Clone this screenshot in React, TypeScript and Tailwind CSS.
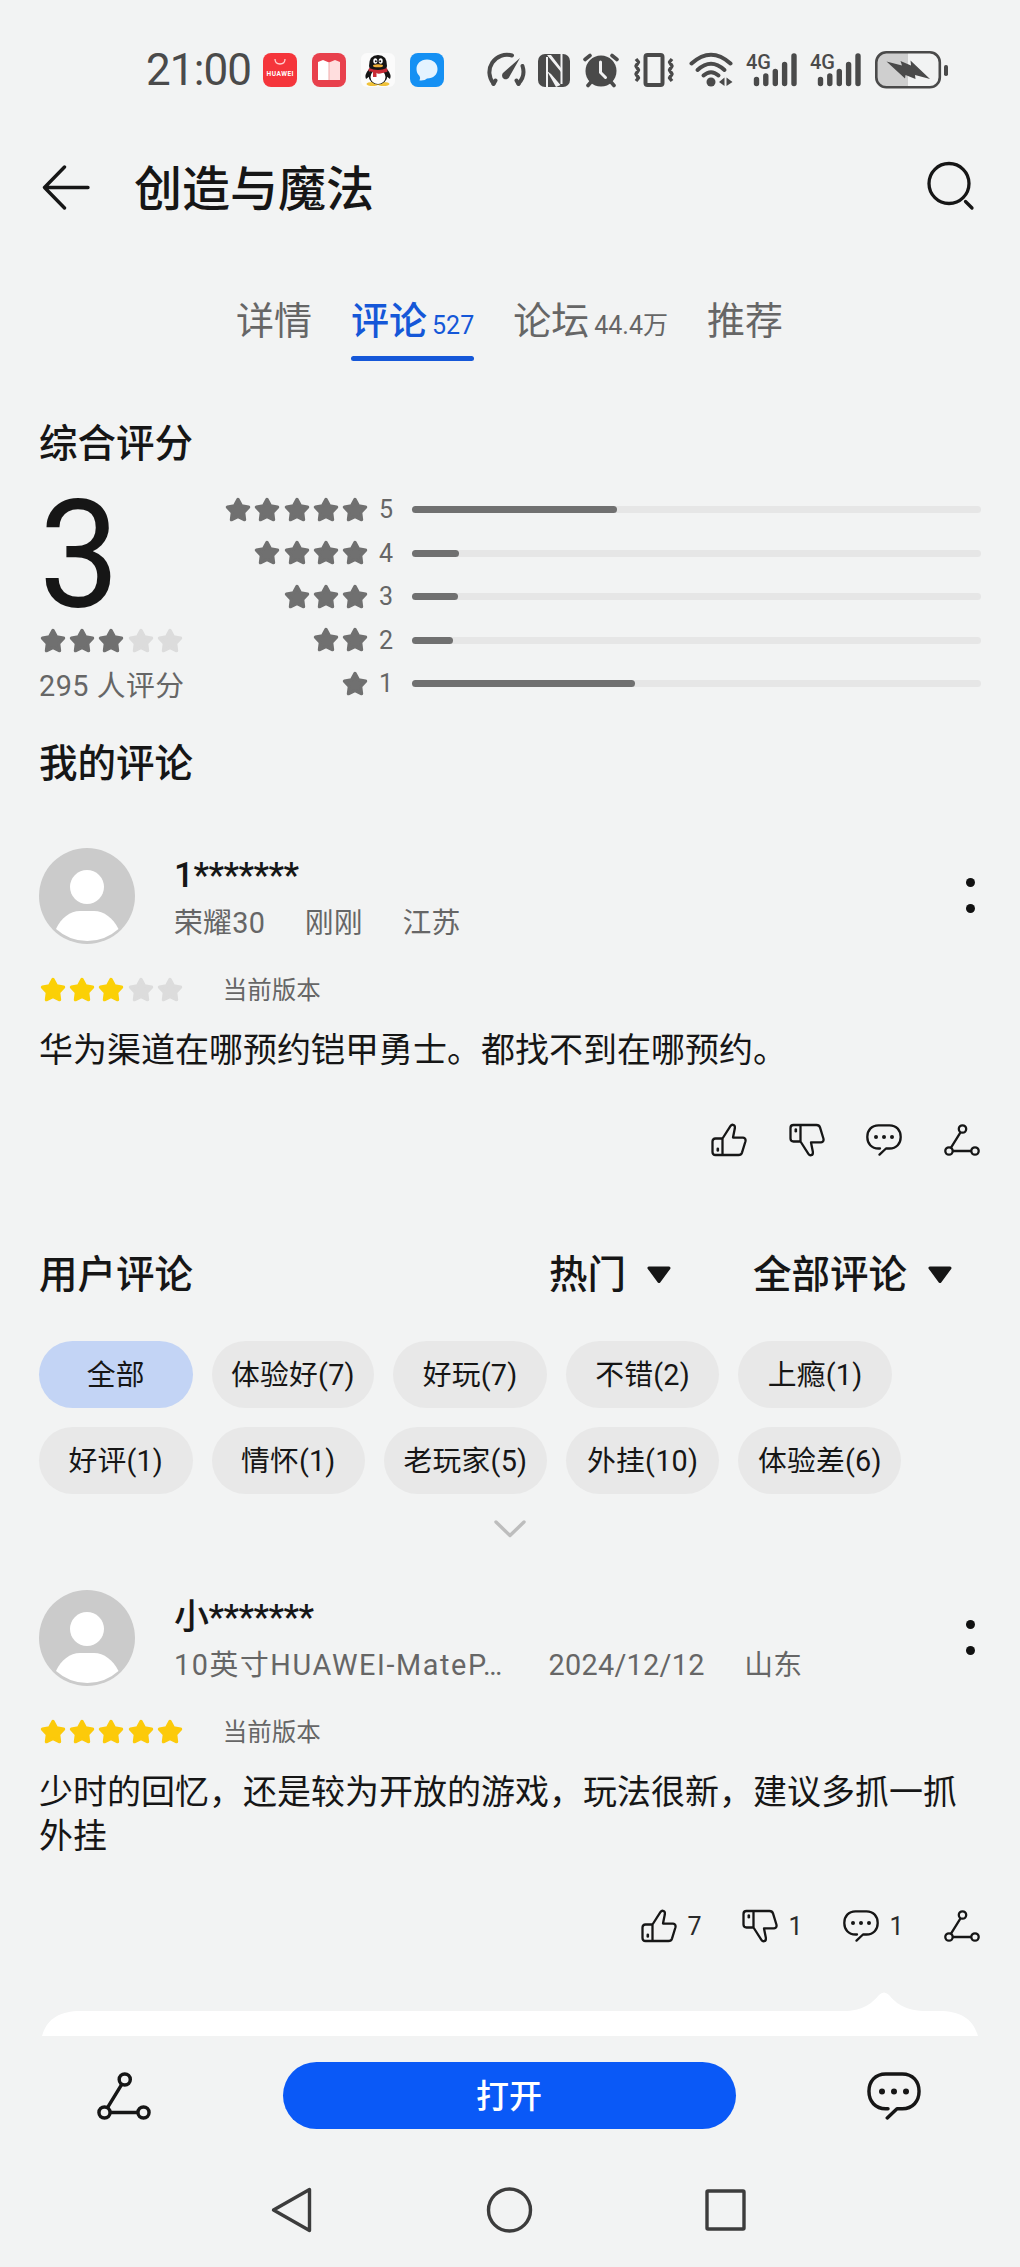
import { ReactNode } from "react";

const tabs = [
  { label: "详情", count: "", active: false },
  { label: "评论", count: "527", active: true },
  { label: "论坛", count: "44.4万", active: false },
  { label: "推荐", count: "", active: false },
];

const ratings = [
  { stars: 5, percent: 36 },
  { stars: 4, percent: 8.2 },
  { stars: 3, percent: 8.1 },
  { stars: 2, percent: 7.2 },
  { stars: 1, percent: 39.2 },
];

const tags = [
  ["全部", "体验好(7)", "好玩(7)", "不错(2)", "上瘾(1)"],
  ["好评(1)", "情怀(1)", "老玩家(5)", "外挂(10)", "体验差(6)"],
];

const reviews = [
  {
    name: "1*******",
    device: "荣耀30",
    deviceClass: "",
    date: "刚刚",
    region: "江苏",
    score: 3,
    starColor: "text-[#fbd006]",
    content: "华为渠道在哪预约铠甲勇士。都找不到在哪预约。",
    likes: "",
    dislikes: "",
    replies: "",
  },
  {
    name: "小*******",
    device: "10英寸HUAWEI-MateP…",
    deviceClass: "w-[335px] tracking-[1.6px] whitespace-nowrap",
    date: "2024/12/12",
    region: "山东",
    score: 5,
    starColor: "text-[#fcca0a]",
    content: "少时的回忆，还是较为开放的游戏，玩法很新，建议多抓一抓外挂",
    likes: "7",
    dislikes: "1",
    replies: "1",
  },
];

function Star({ className }: { className: string }) {
  return (
    <svg viewBox="0 0 26 26" className={`w-[26px] h-[26px] shrink-0 ${className}`}>
      <path
        d="M13 2.4 L16.5 8.7 L23.6 10.1 L18.7 15.5 L19.6 22.7 L13 19.6 L6.4 22.7 L7.3 15.5 L2.4 10.1 L9.5 8.7 Z"
        fill="currentColor"
        stroke="currentColor"
        strokeWidth="3.2"
        strokeLinejoin="round"
      />
    </svg>
  );
}

function Stars({ score, color }: { score: number; color: string }) {
  return (
    <div className="flex gap-[3.2px] pl-px">
      {[1, 2, 3, 4, 5].map((n) => (
        <Star key={n} className={n <= score ? color : "text-[#dcdcdc]"} />
      ))}
    </div>
  );
}

function ThumbIcon({ down = false }: { down?: boolean }) {
  return (
    <svg
      viewBox="0 0 36 34"
      className={`w-[36px] h-[34px] ${down ? "-scale-y-100" : ""}`}
      fill="none"
      stroke="#161616"
      strokeWidth="2.3"
      strokeLinejoin="round"
      strokeLinecap="round"
    >
      <path d="M11.5 15.5 H4.5 Q1.5 15.5 1.5 18.5 V29 Q1.5 32 4.5 32 H27.5 Q30.2 32 31 29.6 L34.4 18.5 Q35.2 15 32 14.6 H22 L23.8 5.6 Q24.3 2.2 22.2 1.8 Q20.6 1.4 19.4 3.2 L11.5 15.5 V32" />
      <path d="M6.8 25.8 V27.5" strokeWidth="2.6" />
    </svg>
  );
}

function CommentIcon({ className }: { className: string }) {
  return (
    <svg
      viewBox="0 0 36 32"
      className={className}
      fill="none"
      stroke="#161616"
      strokeWidth="2.3"
      strokeLinejoin="round"
      strokeLinecap="round"
    >
      <path d="M14 24.5 H12.5 C5.5 24.5 1.3 19.5 1.3 12.9 S5.5 1.3 12.5 1.3 H23.5 C30.5 1.3 34.7 6.3 34.7 12.9 S30.5 24.5 23.5 24.5 H20 L13.5 30.6" />
      <g fill="#161616" stroke="none">
        <circle cx="10" cy="13" r="2" />
        <circle cx="18" cy="13" r="2" />
        <circle cx="26" cy="13" r="2" />
      </g>
    </svg>
  );
}

function ShareIcon({ className }: { className: string }) {
  return (
    <svg viewBox="0 0 36 32" className={className} fill="none" stroke="#161616" strokeWidth="2.3">
      <circle cx="18.5" cy="5" r="3.7" />
      <circle cx="5" cy="27" r="3.7" />
      <circle cx="31" cy="27" r="3.7" />
      <path d="M16.5 8.3 L7 23.7 M8.8 27 H27.2" />
    </svg>
  );
}

function Avatar() {
  return (
    <svg viewBox="0 0 96 96" className="w-24 h-24 shrink-0">
      <circle cx="48" cy="48" r="48" fill="#cbcbcb" />
      <circle cx="48" cy="39" r="17" fill="#fff" />
      <path d="M17 81 C22 70 31 63 41 63 H55 C65 63 74 70 79.5 81 A46.5 46.5 0 0 1 17 81 Z" fill="#fff" />
    </svg>
  );
}

function SignalIcon() {
  return (
    <svg viewBox="0 0 52 36" className="w-[52px] h-[36px] overflow-visible">
      <text x="0" y="16.5" fontSize="21" fontWeight="500" fill="#4a4a4a" textLength="25" lengthAdjust="spacingAndGlyphs">
        4G
      </text>
      <g stroke="#4a4a4a" strokeWidth="5.4" strokeLinecap="round">
        <path d="M10.5 27.5 V31.5 M19.8 24 V31.5 M29.3 19.5 V31.5 M38.6 12.5 V31.5 M48 4 V31.5" />
      </g>
    </svg>
  );
}

function StatusBar() {
  return (
    <div className="h-[140px] flex items-center pl-[146px] text-[#4a4a4a]">
      <span className="w-[105px] text-[44px] leading-none tracking-[-0.9px]">21:00</span>
      <div className="flex items-center gap-[15px] ml-[12px]">
        <svg viewBox="0 0 34 34" className="w-[34px] h-[34px] overflow-visible">
          <rect width="34" height="34" rx="8" fill="#f5353b" />
          <path d="M12 6 Q12 11 17 11 T22 6" fill="none" stroke="#ffd0d0" strokeWidth="1.3" />
          <text x="3.5" y="22.5" fontSize="6.6" fontWeight="700" fill="#fff" textLength="27">HUAWEI</text>
        </svg>
        <svg viewBox="0 0 34 34" className="w-[34px] h-[34px]">
          <rect width="34" height="34" rx="8" fill="#e8404c" />
          <path d="M6 9 L11 7 L17 9.5 V27 H6 Z" fill="#fff" />
          <path d="M17 9.5 L23 7 L28 9 V27 H17 Z" fill="#ffdede" />
          <path d="M17 9.5 V27" stroke="#efaaaa" strokeWidth="1" />
        </svg>
        <svg viewBox="0 0 34 34" className="w-[34px] h-[34px]">
          <rect width="34" height="34" rx="6" fill="#fbfbfb" />
          <ellipse cx="11.5" cy="31" rx="6" ry="2" fill="#f0c23a" />
          <ellipse cx="22.5" cy="31" rx="6" ry="2" fill="#f0c23a" />
          <path d="M8 16 Q3 22 5 26 L9 23 Z M26 16 Q31 22 29 26 L25 23 Z" fill="#151515" />
          <ellipse cx="17" cy="22" rx="9.5" ry="9.5" fill="#151515" />
          <ellipse cx="17" cy="24" rx="7.5" ry="7" fill="#fff" />
          <path d="M8 13 Q8 2 17 2 T26 13 L25 17 H9 Z" fill="#151515" />
          <ellipse cx="14.3" cy="8" rx="2" ry="2.8" fill="#fff" />
          <ellipse cx="19.7" cy="8" rx="2" ry="2.8" fill="#fff" />
          <circle cx="14.8" cy="8.3" r="1" fill="#151515" />
          <circle cx="19.2" cy="8.3" r="1" fill="#151515" />
          <ellipse cx="17" cy="12.8" rx="5" ry="1.5" fill="#efb13a" />
          <path d="M8 15 Q17 19 26 15 L26.5 18.5 Q17 22 15.5 19.8 V24 H12 V19 L7.5 18 Z" fill="#c92b36" />
        </svg>
        <svg viewBox="0 0 34 34" className="w-[34px] h-[34px]">
          <rect width="34" height="34" rx="8" fill="#1590f3" />
          <path d="M17 6.5 C23.5 6.5 27.5 10.8 27.5 16 C27.5 21.5 23.5 25.5 17 25.5 Q15 28 9.5 27.5 Q11 25.5 9.5 23 C7.5 21 6.5 19 6.5 16 C6.5 10.8 10.5 6.5 17 6.5 Z" fill="#e4f3ff" />
        </svg>
      </div>

      {/* 系统图标 */}
      <svg viewBox="0 0 40 36" className="w-[40px] h-[36px] ml-[42px]" fill="none" stroke="#4a4a4a" strokeWidth="4" strokeLinecap="round">
        <path d="M7.5 31.5 A17.5 17.5 0 0 1 26 3.5" />
        <path d="M36.5 14 A17.5 17.5 0 0 1 32.5 31.5" />
        <path d="M7.5 32 L9.5 28.5 M32.5 32 L30.5 28.5" />
        <path d="M34 6 L17.5 20.5 A3.8 3.8 0 1 0 23.5 24.5 Z" fill="#4a4a4a" stroke="none" />
      </svg>
      <svg viewBox="0 0 32 33" className="w-[32px] h-[33px] ml-[12px]">
        <rect width="32" height="33" rx="7" fill="#4a4a4a" />
        <path d="M9 3 V33 M23.5 0 V30" fill="none" stroke="#f2f2f3" strokeWidth="2" />
        <path d="M9 1 L13 1 L23 14 V18 Z M9 17 L13 20 L22.5 31 L18 33 Z" fill="#f2f2f3" />
      </svg>
      <svg viewBox="0 0 36 36" className="w-[36px] h-[36px] ml-[13px]" stroke="#4a4a4a" strokeWidth="3.6" strokeLinecap="round" fill="none">
        <circle cx="18" cy="19" r="15.5" fill="#4a4a4a" stroke="none" />
        <path d="M2 7.5 L7 3.5 M34 7.5 L29 3.5 M8 30 L5 33.5 M28 30 L31 33.5" />
        <path d="M17.5 10 V20.5 L22.5 25.5" stroke="#f2f2f3" strokeWidth="3" />
      </svg>
      <svg viewBox="0 0 42 34" className="w-[42px] h-[34px] ml-[14px]" fill="none" stroke="#4a4a4a" strokeWidth="4">
        <rect x="12.5" y="2" width="17" height="30" rx="2" />
        <path d="M3 6 L5.5 9 L3 13 L5.5 17 L3 21 L5.5 25 L3 28 M39 6 L36.5 9 L39 13 L36.5 17 L39 21 L36.5 25 L39 28" strokeWidth="3.4" strokeLinejoin="round" />
      </svg>
      <svg viewBox="0 0 44 36" className="w-[44px] h-[36px] ml-[14px]" fill="none" stroke="#4a4a4a" strokeWidth="4" strokeLinecap="round">
        <path d="M2.5 11.5 Q22 -6 41.5 11.5" />
        <path d="M8.5 18 Q22 5.5 35.5 18" />
        <path d="M14.5 23.5 Q22 17 29.5 23.5" />
        <circle cx="22" cy="30" r="4.5" fill="#4a4a4a" stroke="none" />
        <path d="M35.5 25.5 V34 L30 30 Z M37.5 25.5 V34 L43.5 30 Z" fill="#4a4a4a" stroke="none" />
      </svg>
      <div className="flex gap-[12px] ml-[13px]">
        <SignalIcon />
        <SignalIcon />
      </div>
      <svg viewBox="0 0 75 38" className="w-[75px] h-[38px] ml-[13px]">
        <path d="M11 2 H33 V36 H11 Q2 36 2 27 V11 Q2 2 11 2 Z" fill="#cfcfcf" />
        <rect x="1.3" y="1.3" width="63.5" height="35" rx="10" fill="none" stroke="#4a4a4a" strokeWidth="2.6" />
        <path d="M11.5 10.5 L27 14.5 L25.5 10 L36 14.5 L35.5 9.5 L55 28 L40 24 L40.5 28 L30.5 24 L30 27.5 Z" fill="#4a4a4a" />
        <rect x="69" y="14" width="4" height="11" rx="1.8" fill="#4a4a4a" />
      </svg>
    </div>
  );
}

function Action({ icon, count }: { icon: ReactNode; count?: string }) {
  return (
    <div className="flex items-center">
      {icon}
      {count ? <span className="w-[13px] ml-[11px] pt-px text-[25px] leading-[34px] text-[#2a2a2a]">{count}</span> : null}
    </div>
  );
}

function Review({ review }: { review: typeof reviews[0] }) {
  return (
    <article>
      <div className="h-[97px] flex">
        <Avatar />
        <div className="flex-1 ml-[39px] pt-[6px]">
          <div className="h-[44px] text-[35px] leading-[44px] tracking-[-0.5px] font-medium">{review.name}</div>
          <div className="h-[48px] flex gap-[39.5px] text-[28.8px] leading-[50px] tracking-[0.3px] text-[#666]">
            <span className={review.deviceClass}>{review.device}</span>
            <span>{review.date}</span>
            <span>{review.region}</span>
          </div>
        </div>
        <div className="flex flex-col gap-[17px] pt-[30px] mr-[6px]">
          <i className="w-[9px] h-[9px] rounded-full bg-[#111]"></i>
          <i className="w-[9px] h-[9px] rounded-full bg-[#111]"></i>
        </div>
      </div>
      <div className="h-[40px] mt-[25px] flex items-center">
        <Stars score={review.score} color={review.starColor} />
        <span className="h-[40px] ml-[40px] text-[24.5px] leading-[42px] text-[#666]">当前版本</span>
      </div>
      <p className="mt-[18px] text-[34px] leading-[44px]">{review.content}</p>
      <div className={`h-[40px] mt-[48px] flex items-center justify-end pr-[1.5px] ${review.likes ? "gap-[41px]" : "gap-[41.5px]"}`}>
        <Action icon={<ThumbIcon />} count={review.likes} />
        <Action icon={<ThumbIcon down />} count={review.dislikes} />
        <Action icon={<CommentIcon className="w-[36px] h-[32px]" />} count={review.replies} />
        <Action icon={<ShareIcon className="w-[36px] h-[32px]" />} />
      </div>
    </article>
  );
}

function Dropdown({ label }: { label: string }) {
  return (
    <div className="flex items-center gap-[20px]">
      <span>{label}</span>
      <svg viewBox="0 0 26 18" className="w-[26px] h-[18px]">
        <path d="M3 2 H23 L13 15.5 Z" fill="#161616" stroke="#161616" strokeWidth="3" strokeLinejoin="round" />
      </svg>
    </div>
  );
}

export default function App() {
  return (
    <div className="w-[1020px] h-[2267px] overflow-hidden bg-[#f2f3f3] text-[#161616] font-[Roboto,'Noto_Sans_CJK_SC',sans-serif]">
      <StatusBar />

      {/* 标题栏 */}
      <header className="h-[96px] flex items-center pl-[42px] pr-[45px]">
        <svg viewBox="0 0 48 46" className="w-[48px] h-[46px]" fill="none" stroke="#161616" strokeWidth="3.4" strokeLinecap="round" strokeLinejoin="round">
          <path d="M46 22.5 H2.5 M22.5 2 L2.5 22.5 L22.5 43" />
        </svg>
        <h1 className="flex-1 ml-[44px] pt-[3px] text-[48px] leading-[72px] font-medium">创造与魔法</h1>
        <svg viewBox="0 0 48 50" className="w-[48px] h-[50px] overflow-visible" fill="none" stroke="#161616" strokeWidth="3.3" strokeLinecap="round">
          <circle cx="22" cy="20.5" r="20" />
          <path d="M38.5 38.5 L45 45" />
        </svg>
      </header>

      {/* 标签页 */}
      <nav className="mt-[60px] h-[65px] flex justify-center gap-[39px] pr-px">
        {tabs.map((tab) => (
          <div key={tab.label} className={`flex flex-col ${tab.active ? "text-[#1557d8]" : "text-[#666]"}`}>
            <div className="h-[48px] flex items-baseline leading-[50px]">
              <span className={`text-[38px] ${tab.active ? "font-medium" : ""}`}>{tab.label}</span>
              {tab.count && <span className="ml-[5px] text-[25px]">{tab.count}</span>}
            </div>
            {tab.active && <div className="h-[5px] mt-[12px] rounded-full bg-[#1557d8]"></div>}
          </div>
        ))}
      </nav>

      <main className="px-[39px]">
        {/* 综合评分 */}
        <h2 className="mt-[55px] text-[38.5px] leading-[56px] font-medium">综合评分</h2>
        <section className="mt-[15px] h-[223px] flex justify-between">
          <div>
            <div className="h-[133px] w-[100px] origin-left scale-x-95 text-[151px] leading-[137px]">3</div>
            <div className="h-[40px] pt-px flex items-center">
              <Stars score={3} color="text-[#707070]" />
            </div>
            <div className="h-[50px] text-[28.8px] leading-[52px] tracking-[0.5px] text-[#666]">295 人评分</div>
          </div>
          <div className="w-[756px] pt-px">
            {ratings.map((row) => (
              <div key={row.stars} className="h-[43.5px] flex items-center">
                <div className="w-[143px] flex justify-end gap-[3.2px]">
                  {Array.from({ length: row.stars }, (_, i) => (
                    <Star key={i} className="text-[#707070]" />
                  ))}
                </div>
                <span className="w-[33px] ml-[11px] pt-px text-[25px] leading-[30px] text-[#666]">{row.stars}</span>
                <div className="flex-1 h-[7px] rounded-full bg-[#e6e6e6]">
                  <div className="h-[7px] rounded-full bg-[#707070]" style={{ width: `${row.percent}%` }}></div>
                </div>
              </div>
            ))}
          </div>
        </section>

        {/* 我的评论 */}
        <h2 className="mt-[26px] mb-[56px] text-[38.5px] leading-[56px] font-medium">我的评论</h2>
        <Review review={reviews[0]} />

        {/* 用户评论 */}
        <div className="mt-[87px] h-[56px] flex items-center text-[38.5px] leading-[58px] font-medium">
          <h2 className="flex-1">用户评论</h2>
          <div className="flex gap-[81px] pr-[28px]">
            <Dropdown label="热门" />
            <Dropdown label="全部评论" />
          </div>
        </div>
        <div className="mt-[38px] flex flex-col gap-[19px]">
          {tags.map((row, i) => (
            <div key={i} className="flex gap-[19px]">
              {row.map((tag) => (
                <span
                  key={tag}
                  className={`h-[67px] min-w-[153.5px] px-[19.6px] rounded-full text-center text-[28.8px] leading-[69px] tracking-[0.2px] ${
                    tag === "全部" ? "bg-[#c3d4f5]" : "bg-[#e8e8e8]"
                  }`}
                >
                  {tag}
                </span>
              ))}
            </div>
          ))}
        </div>
        <svg viewBox="0 0 32 18" className="w-[32px] h-[18px] mx-auto mt-[26px] mb-[52px]" fill="none" stroke="#bdbdbd" strokeWidth="3.4" strokeLinecap="round" strokeLinejoin="round">
          <path d="M2 2 L16 15.5 L30 2" />
        </svg>
        <Review review={reviews[1]} />

        {/* 回复气泡 */}
        <svg viewBox="0 0 942 45" className="block w-[942px] h-[45px] mt-[45px]">
          <path d="M3 45 C8 28 20 20 42 20 H808 C826 19 834 11 840 4 Q845 -1 850 4 C856 11 864 19 884 20 H900 C922 20 934 28 939 45 Z" fill="#fff" />
        </svg>
      </main>

      {/* 底部操作栏 */}
      <footer className="h-[119px] flex items-center justify-between pl-[97px] pr-[99px]">
        <ShareIcon className="w-[54px] h-[48px]" />
        <button className="w-[453px] h-[67px] rounded-full bg-[#0a59f7] text-white text-[33px] leading-[69px] font-medium">
          打开
        </button>
        <CommentIcon className="w-[54px] h-[48px]" />
      </footer>

      <div className="h-[110px] flex items-center pl-[270px]">
        <svg viewBox="0 0 476 46" className="w-[476px] h-[46px]" fill="none" stroke="#3c3c3c" strokeWidth="3.4" strokeLinejoin="round">
          <path d="M39.5 2.5 V43.5 L3.5 23 Z" />
          <circle cx="239.5" cy="23" r="21" />
          <rect x="437" y="4" width="37" height="38" rx="1" />
        </svg>
      </div>
    </div>
  );
}
